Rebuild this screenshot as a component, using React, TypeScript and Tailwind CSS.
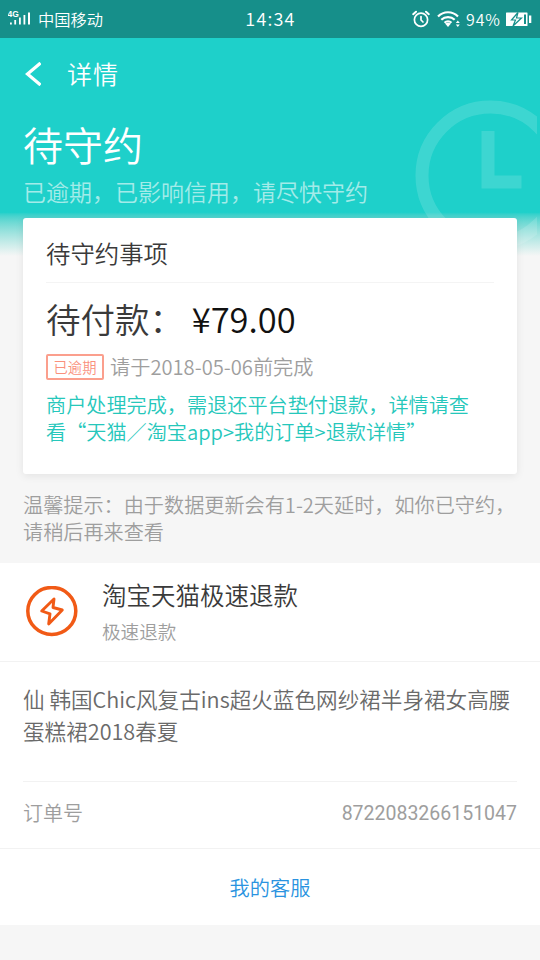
import { ReactNode } from 'react'

function SignalIcon() {
  return (
    <svg className="h-6 w-[24px] shrink-0" viewBox="0 0 24 24" fill="white">
      <text x="-0.500" y="9.500" fontSize="8.500" fontWeight="600" fontFamily="Liberation Sans, sans-serif">4G</text>
      <rect x="2" y="15.500" width="1.800" height="2" />
      <rect x="6.300" y="13" width="1.800" height="4.500" />
      <rect x="11" y="10.500" width="1.800" height="7" />
      <rect x="15.500" y="8" width="1.800" height="9.500" />
      <rect x="20" y="5.500" width="2" height="12" />
    </svg>
  )
}

function AlarmIcon() {
  return (
    <svg className="h-[18px] w-[18px]" viewBox="0 0 18 18" fill="none" stroke="white" strokeWidth="1.7" strokeLinecap="round">
      <circle cx="9" cy="9.800" r="6.600" />
      <path d="M9 6.500V10l2 2" />
      <path d="M1.200 4.200 4 1.700M16.800 4.200 14 1.700" strokeWidth="2" />
    </svg>
  )
}

function WifiIcon() {
  return (
    <svg className="h-[18px] w-[24px]" viewBox="0 0 24 18" fill="none" stroke="white" strokeWidth="2.200">
      <path d="M1 6.500C6.500 .8 15.500 .8 21 6.500" />
      <path d="M4.300 9.800C8 6.200 14 6.200 17.700 9.800" />
      <path d="M7.500 12.800C9.500 11 12.500 11 14.500 12.800" />
      <path d="M8 13.500 11 17 14 13.500 11 12.500z" fill="white" stroke="none" />
      <path d="M20.800 10.500 22.800 13h-4zM20.800 17 18.800 14.500h4z" fill="white" stroke="none" />
    </svg>
  )
}

function BatteryIcon() {
  return (
    <svg className="h-[16px] w-[28px]" viewBox="0 0 28 16">
      <rect x="1" y="1.500" width="21.500" height="13.500" rx="0.500" fill="white" />
      <rect x="19" y="3.500" width="2" height="9.500" fill="#168f8a" />
      <rect x="24" y="4.500" width="2.300" height="7.500" fill="white" />
      <path d="M13 1.500 6.500 9h4L8 15 16.500 7h-5z" fill="white" stroke="#168f8a" strokeWidth="1.200" />
    </svg>
  )
}

function BoltIcon() {
  return (
    <svg className="h-[52px] w-[52px]" viewBox="0 0 52 52" fill="none" stroke="#f15a16" strokeLinejoin="round">
      <ellipse cx="25.800" cy="25" rx="24" ry="23.500" strokeWidth="3.500" />
      <path d="M28 13 15.700 25 24 27.800 22.700 38 36.300 24 27 21.500z" strokeWidth="2.900" />
    </svg>
  )
}

function StatusBar() {
  return (
    <div className="flex h-[38px] items-center justify-between bg-[#168f8a] pl-2 pr-[7px] text-white">
      <div className="flex w-[200px] items-center">
        <SignalIcon />
        <span className="ml-[6px] text-[16.300px] leading-[37px]">中国移动</span>
      </div>
      <span className="pb-px text-[18px] tracking-[1.2px]">14:34</span>
      <div className="flex w-[200px] items-center justify-end">
        <AlarmIcon />
        <span className="ml-[7px]"><WifiIcon /></span>
        <span className="ml-[5px] w-[37px] pb-px text-[16px] leading-[36px] tracking-[0.9px]">94%</span>
        <span className="ml-[2px]"><BatteryIcon /></span>
      </div>
    </div>
  )
}

function Header() {
  return (
    <div className="relative h-[218px] overflow-hidden bg-linear-to-b from-[#1ed0ca] from-80% to-[#f6f6f6] pl-[23px] text-white">
      <svg className="absolute top-[62px] right-[3px] h-[157px] w-[123px]" viewBox="0 0 123 157" fill="none" stroke="white" strokeOpacity=".14" strokeWidth="13">
        <circle cx="76.500" cy="75.500" r="68.500" />
        <path d="M74 31V82H107.500" />
      </svg>
      <div className="flex h-[71px] items-center">
        <svg className="h-6 w-[18px]" viewBox="0 0 18 24" fill="none" stroke="white" strokeWidth="3.200">
          <path d="M17.500 1 4.500 12 17.500 23" />
        </svg>
        <h1 className="ml-[26px] text-[25px] tracking-[1px]">详情</h1>
      </div>
      <h2 className="mt-[7px] text-[40px] leading-[56px] font-[350]">待守约</h2>
      <p className="mt-[4px] text-[23px] leading-[30px] font-[350] text-white/60">已逾期，已影响信用，请尽快守约</p>
    </div>
  )
}

function Card() {
  return (
    <div className="relative mx-[23px] -mt-[38px] h-[256px] rounded-[3px] bg-white px-[23px] shadow-[0_2px_8px_rgba(0,0,0,0.08)]">
      <div className="h-[65px] border-b border-[#f4f4f4] text-[24.4px] leading-[69px] text-[#3a3a3a]">待守约事项</div>
      <div className="pt-[11px] text-[34.5px] leading-[48px] whitespace-pre text-[#3a3a3a]">
        待付款： <span className="text-[#111]">¥79.00</span>
      </div>
      <div className="mt-[10px] flex h-[30px] items-center">
        <span className="h-[26px] w-[58px] rounded-[2px] border-2 border-[#fb9f8d] text-center text-[14.3px] leading-[21px] text-[#fa907c]">已逾期</span>
        <span className="ml-[6px] text-[20.2px] leading-[30px] text-[#9e9e9e]">请于2018-05-06前完成</span>
      </div>
      <p className="mt-[9px] text-[20.15px] leading-[27px] whitespace-nowrap text-[#26c7bb]">
        商户处理完成，需退还平台垫付退款，详情请查<br />看“天猫／淘宝app&gt;我的订单&gt;退款详情”
      </p>
    </div>
  )
}

function Row({ className, children }: { className: string; children: ReactNode }) {
  return <div className={'flex items-center px-[23px] ' + className}>{children}</div>
}

export default function App() {
  return (
    <div className="h-[960px] w-[540px] overflow-hidden bg-[#f6f6f6] font-['Noto_Sans_CJK_SC',sans-serif] font-[350]">
      <StatusBar />
      <Header />
      <Card />
      <p className="mt-[17px] pl-[23px] text-[20.15px] leading-[27px] whitespace-nowrap text-[#9e9e9e]">
        温馨提示：由于数据更新会有1-2天延时，如你已守约，<br />请稍后再来查看
      </p>
      <div className="mt-[18px] bg-white">
        <Row className="h-[99px] border-b border-[#f2f2f2]">
          <span className="ml-[3px]"><BoltIcon /></span>
          <div className="mb-[2px] ml-[24px]">
            <div className="text-[24.500px] leading-[40px] text-[#3a3a3a]">淘宝天猫极速退款</div>
            <div className="text-[18.600px] leading-[32px] text-[#9e9e9e]">极速退款</div>
          </div>
        </Row>
        <div className="mx-[23px] h-[120px] border-b border-[#f2f2f2] pt-[21px] text-[21.6px] leading-[32px] whitespace-nowrap text-[#6a6a6a]">
          仙 韩国Chic风复古ins超火蓝色网纱裙半身裙女高腰<br />蛋糕裙2018春夏
        </div>
        <Row className="h-[67px] justify-between border-b border-[#f2f2f2] pb-[4px] text-[20px] text-[#9e9e9e]">
          <span>订单号</span>
          <span className="pt-[2px] font-['Roboto',sans-serif] text-[19.500px] font-normal">8722083266151047</span>
        </Row>
        <div className="h-[76px] text-center text-[20.2px] leading-[77px] text-[#2a93e0]">我的客服</div>
      </div>
    </div>
  )
}
